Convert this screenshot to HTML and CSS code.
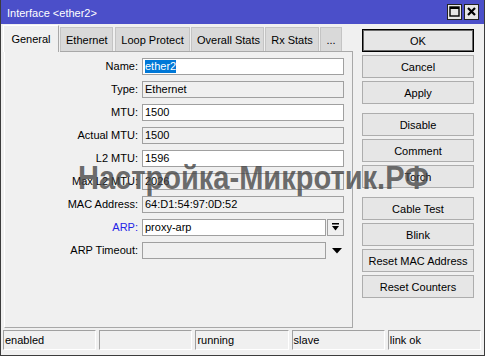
FILE: index.html
```html
<!DOCTYPE html>
<html>
<head>
<meta charset="utf-8">
<link rel="stylesheet" href="styles.css">
</head>
<body>
<div class="window">
  <div class="titlebar">
    <span class="title">Interface &lt;ether2&gt;</span>
    <div class="tb-buttons">
      <span class="tb-btn"><svg width="11" height="11" viewBox="0 0 11 11"><rect x="1" y="1" width="9" height="9" fill="none" stroke="#000" stroke-width="1.4"/><rect x="1" y="1" width="9" height="2" fill="#000"/></svg></span>
      <span class="tb-btn"><svg width="11" height="11" viewBox="0 0 11 11"><path d="M2 2 L9 9 M9 2 L2 9" stroke="#000" stroke-width="2.2" fill="none"/></svg></span>
    </div>
  </div>
  <div class="main">
    <div class="left">
      <div class="tabs">
        <div class="tab active">General</div>
        <div class="tab t-eth">Ethernet</div>
        <div class="tab t-loop">Loop Protect</div>
        <div class="tab t-overall">Overall Stats</div>
        <div class="tab t-rx">Rx Stats</div>
        <div class="tab t-more">...</div>
      </div>
      <div class="panel">
        <div class="form">
          <label class="lbl">Name:</label>
          <div class="field edit"><span class="sel">ether2</span></div>

          <label class="lbl">Type:</label>
          <div class="field ro">Ethernet</div>

          <label class="lbl">MTU:</label>
          <div class="field edit">1500</div>

          <label class="lbl">Actual MTU:</label>
          <div class="field ro">1500</div>

          <label class="lbl">L2 MTU:</label>
          <div class="field edit">1596</div>

          <label class="lbl">Max L2 MTU:</label>
          <div class="field ro">2026</div>

          <label class="lbl">MAC Address:</label>
          <div class="field ro">64:D1:54:97:0D:52</div>

          <label class="lbl link">ARP:</label>
          <div class="combo">
            <div class="field edit grow">proxy-arp</div>
            <span class="dd-btn"><svg width="9" height="9" viewBox="0 0 9 9"><rect x="1" y="0" width="7" height="1.5" fill="#000"/><path d="M1 3 L8 3 L4.5 7.5 Z" fill="#000"/></svg></span>
          </div>

          <label class="lbl">ARP Timeout:</label>
          <div class="combo">
            <div class="field ro grow"></div>
            <span class="dd-plain"><svg width="10" height="6" viewBox="0 0 10 6"><path d="M0 0 L10 0 L5 5.5 Z" fill="#000"/></svg></span>
          </div>
        </div>
      </div>
    </div>
    <div class="actions">
      <div class="group">
        <button class="btn default">OK</button>
        <button class="btn">Cancel</button>
        <button class="btn">Apply</button>
      </div>
      <div class="group">
        <button class="btn">Disable</button>
        <button class="btn">Comment</button>
        <button class="btn">Torch</button>
      </div>
      <div class="group">
        <button class="btn">Cable Test</button>
        <button class="btn">Blink</button>
        <button class="btn">Reset MAC Address</button>
        <button class="btn">Reset Counters</button>
      </div>
    </div>
  </div>
  <div class="status">
    <div class="cell">enabled</div>
    <div class="cell"></div>
    <div class="cell">running</div>
    <div class="cell">slave</div>
    <div class="cell">link ok</div>
  </div>
  <div class="watermark">Настройка-Микротик.РФ</div>
</div>
</body>
</html>
```

FILE: styles.css
```css
* { box-sizing: border-box; }
html, body {
  margin: 0;
  padding: 0;
  background: #f0f0f0;
}
body {
  font-family: "Liberation Sans", Arial, sans-serif;
  font-size: 11px;
  color: #000;
}
.window {
  position: relative;
  width: 485px;
  height: 356px;
  background: #f0f0f0;
  border: 1px solid #3c3c3c;
  border-top: none;
  display: flex;
  flex-direction: column;
  overflow: hidden;
}
.titlebar {
  height: 24px;
  flex: none;
  background: #4b4fc9;
  display: flex;
  align-items: center;
  justify-content: space-between;
  padding: 0 5px 0 6px;
}
.title {
  color: #fff;
  font-size: 11px;
  padding-top: 2px;
}
.tb-buttons {
  display: flex;
  gap: 2px;
  margin-top: -1px;
}
.tb-btn {
  width: 15px;
  height: 16px;
  background: #e6e6e6;
  border: 1px solid #222;
  display: flex;
  align-items: center;
  justify-content: center;
}
.main {
  display: flex;
  flex: none;
  height: 304px;
  padding-left: 2px;
}
.left {
  width: 350px;
  display: flex;
  flex-direction: column;
}
.tabs {
  height: 28px;
  display: flex;
  align-items: flex-end;
  padding-top: 1px;
}
.tab {
  height: 25px;
  line-height: 24px;
  background: #d9d9d9;
  border: 1px solid #c4c4c4;
  border-bottom: 1px solid #a8a8a8;
  padding: 0 5px;
  margin-right: 1px;
  white-space: nowrap;
  text-align: center;
}
.tab.active {
  height: 27px;
  line-height: 26px;
  background: #f0f0f0;
  border: 1px solid #fff;
  border-bottom: none;
  border-right: 1px solid #a8a8a8;
  width: 56px;
  padding: 0;
}
.t-eth { width: 53px; }
.t-loop { width: 75px; margin-left: 1px; }
.t-overall { width: 73px; }
.t-rx { width: 54px; }
.t-more { width: 22px; padding: 0; }
.panel {
  height: 276px;
  margin-left: 1px;
  border: 1px solid #a8a8a8;
  border-top: none;
  border-left: 1px solid #fff;
  padding: 6px 0 0 0;
  position: relative;
}
.panel::before {
  content: "";
  position: absolute;
  top: -1px;
  left: 55px;
  right: -1px;
  border-top: 1px solid #a8a8a8;
}
.form {
  display: grid;
  grid-template-columns: 133px 202px;
  column-gap: 4px;
  row-gap: 6px;
}
.lbl {
  text-align: right;
  line-height: 17px;
  white-space: nowrap;
}
.lbl.link { color: #2323e6; }
.field {
  height: 17px;
  line-height: 15px;
  border: 1px solid #a0a0a0;
  padding-left: 2px;
  white-space: nowrap;
}
.field.edit { background: #fff; }
.field.ro { background: #f0f0f0; }
.sel {
  background: #0078d7;
  color: #fff;
  padding: 0 0 1px 0;
}
.combo {
  display: flex;
  gap: 1px;
}
.grow { flex: 1; }
.dd-btn {
  width: 17px;
  height: 17px;
  border: 1px solid #a0a0a0;
  background: #f0f0f0;
  display: flex;
  align-items: center;
  justify-content: center;
}
.dd-plain {
  width: 17px;
  height: 17px;
  display: flex;
  align-items: center;
  justify-content: center;
  padding-left: 3px;
}
.actions {
  margin-left: 9px;
  width: 112px;
  padding-top: 5px;
  display: flex;
  flex-direction: column;
  gap: 9px;
}
.group {
  display: flex;
  flex-direction: column;
  gap: 3px;
}
.btn {
  height: 23px;
  width: 112px;
  font-family: "Liberation Sans", Arial, sans-serif;
  font-size: 11px;
  color: #000;
  background: #e6e6e6;
  border: 1px solid #adadad;
  padding: 0;
  margin: 0;
}
.btn.default {
  border: 1px solid #000;
  box-shadow: inset 0 0 0 1px #6a6a6a;
}
.status {
  display: flex;
  gap: 3px;
  padding: 2px 3px 0 2px;
  flex: none;
}
.cell {
  flex: 1;
  height: 20px;
  line-height: 18px;
  border: 1px solid #fff;
  border-top-color: #a0a0a0;
  border-left-color: #a0a0a0;
  padding-left: 1px;
  white-space: nowrap;
}
.watermark {
  position: absolute;
  left: 77px;
  top: 161px;
  font-family: "Liberation Sans", Arial, sans-serif;
  font-weight: bold;
  font-size: 33px;
  line-height: 33px;
  color: rgba(70, 70, 70, 0.8);
  white-space: nowrap;
  transform: scaleX(0.88);
  transform-origin: left top;
  pointer-events: none;
}
```
